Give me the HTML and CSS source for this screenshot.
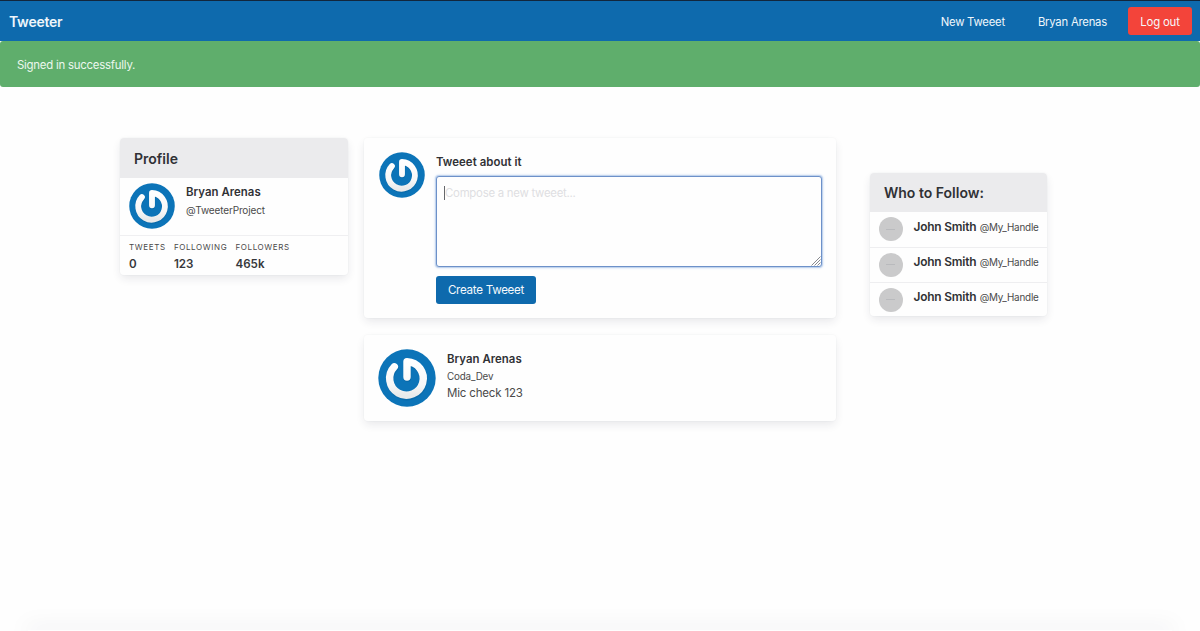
FILE: index.html
```html
<!DOCTYPE html>
<html lang="en">
<head>
<meta charset="utf-8">
<title>Tweeter</title>
<link rel="stylesheet" href="styles.css">
</head>
<body>
<svg class="defs" width="0" height="0" aria-hidden="true">
  <defs>
    <linearGradient id="ring" x1="0" y1="0" x2="0" y2="1"><stop offset="0" stop-color="#fff"/><stop offset=".7" stop-color="#f7f7f7"/><stop offset="1" stop-color="#e8eaeb"/></linearGradient>
    <symbol id="power" viewBox="0 0 58 58">
      <circle cx="29" cy="29" r="28.7" fill="#0c74b8"/>
      <g fill="none" stroke-linecap="round" stroke-linejoin="round" stroke-width="7.4">
        <path d="M16.3 18.4A16.8 16.8 0 1 0 29 13.2V28.5" stroke="#07588f" stroke-opacity=".35" transform="translate(.4 .8)"/>
        <path d="M16.3 17.8A16.8 16.8 0 1 0 29 12.6V28" stroke="url(#ring)"/>
      </g>
    </symbol>
  </defs>
</svg>
<nav class="navbar">
  <a class="brand">Tweeter</a>
  <div class="nav-end">
    <a class="nav-link">New Tweeet</a>
    <a class="nav-link">Bryan Arenas</a>
    <a class="button danger">Log out</a>
  </div>
</nav>
<div class="notification">Signed in successfully.</div>
<main class="columns">
  <section class="card profile">
    <h2 class="card-title">Profile</h2>
    <div class="profile-user">
      <svg class="avatar"><use href="#power"/></svg>
      <div>
        <p class="name">Bryan Arenas</p>
        <p class="handle">@TweeterProject</p>
      </div>
    </div>
    <div class="stats">
      <div class="stat"><p class="stat-label">Tweets</p><p class="stat-value">0</p></div>
      <div class="stat"><p class="stat-label">Following</p><p class="stat-value">123</p></div>
      <div class="stat"><p class="stat-label">Followers</p><p class="stat-value">465k</p></div>
    </div>
  </section>
  <div class="feed">
    <section class="card composer">
      <svg class="avatar"><use href="#power"/></svg>
      <form class="form">
        <label class="label" for="tweeet">Tweeet about it</label>
        <div class="field">
          <textarea class="textarea" id="tweeet" placeholder="Compose a new tweeet..."></textarea>
          <span class="caret"></span>
          <svg class="grip" viewBox="0 0 10 10"><path d="M.5 9.5L9.5.5M3.5 9.5L9.5 3.5M6.5 9.5L9.5 6.5"/></svg>
        </div>
        <button class="button primary" type="button">Create Tweeet</button>
      </form>
    </section>
    <article class="card tweet">
      <svg class="avatar large"><use href="#power"/></svg>
      <div>
        <p class="name">Bryan Arenas</p>
        <p class="handle">Coda_Dev</p>
        <p class="message">Mic check 123</p>
      </div>
    </article>
  </div>
  <section class="card follow">
    <h2 class="card-title">Who to Follow:</h2>
    <div class="person"><span class="dot"></span><p class="who"><strong>John Smith</strong> <small>@My_Handle</small></p></div>
    <div class="person"><span class="dot"></span><p class="who"><strong>John Smith</strong> <small>@My_Handle</small></p></div>
    <div class="person"><span class="dot"></span><p class="who"><strong>John Smith</strong> <small>@My_Handle</small></p></div>
  </section>
</main>
<div class="page-end"></div>
</body>
</html>
```
FILE: styles.css
```css
* { box-sizing: border-box; }
body {
  margin: 0;
  height: 631px;
  overflow: hidden;
  display: flex;
  flex-direction: column;
  background: #fefefe;
  color: #4a4a4a;
  font: 11.4px/17px Inter, "Liberation Sans", sans-serif;
}
p, h2 { margin: 0; }
.defs { position: absolute; }
.navbar {
  height: 41px;
  flex: none;
  display: flex;
  align-items: center;
  justify-content: space-between;
  padding: 0 8px 0 9px;
  border-top: 1px solid #12263c;
  background: #0e6aad;
  color: #eef6fb;
}
.brand { padding-top: 1px; font-size: 14px; font-weight: 600; letter-spacing: -.25px; }
.nav-end { display: flex; align-items: center; font-size: 11.3px; letter-spacing: -.22px; }
.nav-link { margin-right: 33px; padding-top: 2px; }
.nav-link + .nav-link { margin-right: 21px; }
.button {
  height: 28px;
  display: flex;
  align-items: center;
  justify-content: center;
  border: 0;
  border-radius: 3px;
  color: #f5f9fc;
  font: 11.4px Inter, "Liberation Sans", sans-serif;
}
.danger { width: 64px; padding-top: 1px; background: #f3443a; letter-spacing: -.2px; }
.primary { width: 100px; margin-top: 8px; background: #0e6aad; font-size: 11.6px; letter-spacing: -.28px; }
.notification {
  height: 46px;
  flex: none;
  padding: 16px 17px;
  border-radius: 3px;
  background: #5fae6c;
  color: #ecf7ee;
  letter-spacing: -.23px;
}
.columns {
  flex: 1;
  display: grid;
  grid-template-columns: 228px 472px 178px;
  column-gap: 16px;
  align-items: start;
  padding: 51px 0 0 120px;
}
.card {
  border-radius: 4px;
  background: #fefefe;
  box-shadow: 0 4px 10px -1px rgba(40, 40, 60, .11), 0 0 0 1px rgba(30, 50, 80, .014);
}
.card-title {
  height: 40px;
  padding: 0 14px;
  border-radius: 4px 4px 0 0;
  background: #ebebed;
  color: #303135;
  font-size: 14px;
  font-weight: 600;
  line-height: 41px;
}
.profile { height: 137px; }
.profile-user { height: 57px; display: flex; gap: 11px; padding: 5px 9px; }
.avatar { width: 46px; height: 46px; flex: none; }
.large { width: 58px; height: 58px; }
.name { color: #303135; font-size: 11.4px; font-weight: 600; line-height: 18px; letter-spacing: .04px; }
.profile .name { padding-top: 1px; line-height: 17px; }
.handle { font-size: 10px; line-height: 18px; letter-spacing: -.14px; }
.stats { display: flex; gap: 8.2px; padding: 3px 9px; border-top: 1px solid #efeff1; }
.stat-label { font-size: 8px; line-height: 17px; letter-spacing: .62px; text-transform: uppercase; }
.stat-value { color: #36373b; font-size: 11.6px; font-weight: 600; line-height: 16px; }
.feed { display: grid; gap: 17px; }
.composer { height: 180px; display: flex; gap: 11px; padding: 14px 14px 14px 15px; }
.composer .avatar { margin-right: .5px; margin-left: -.5px; }
.form { flex: 1; }
.label { display: block; height: 23px; padding-top: 1px; color: #303135; font-size: 11.4px; font-weight: 600; line-height: 18px; letter-spacing: .05px; }
.field { position: relative; height: 93px; padding-top: 1px; }
.textarea {
  display: block;
  width: 386px;
  height: 91px;
  resize: none;
  padding: 8px;
  border: 1px solid #6d91c9;
  border-radius: 3px;
  outline: 0;
  background: #fefefe;
  box-shadow: 0 0 1px 1px #bdd1ec, 0 0 3px 1px #dce8f8;
  font: 11.4px/17px Inter, "Liberation Sans", sans-serif;
  letter-spacing: -.26px;
}
.textarea::placeholder { color: #dedfe2; opacity: 1; }
.caret { position: absolute; left: 8px; top: 11px; width: 1px; height: 14px; background: #66686c; }
.grip { position: absolute; right: 1px; bottom: 2px; width: 10px; height: 10px; fill: none; stroke: #686b72; stroke-width: .8; }
.tweet { height: 86px; display: flex; gap: 11px; padding: 14px; }
.tweet .name { padding-top: 1px; line-height: 19px; }
.tweet .handle { line-height: 16px; font-size: 9.8px; }
.message { font-size: 11.5px; line-height: 16px; letter-spacing: -.17px; }
.follow { height: 143px; margin: 35px 0 0 18px; width: 177px; }
.follow .card-title { height: 39px; line-height: 40px; }
.person { height: 35px; display: flex; gap: 11px; padding: 5px 8.5px; }
.person + .person { border-top: 1px solid #eeeef0; padding-top: 5px; }
.person:nth-child(n+3) { margin-top: -.2px; }
.dot {
  width: 24px;
  height: 24px;
  flex: none;
  border-radius: 50%;
  background: linear-gradient(#b9babd, #b9babd) center / 9px 1px no-repeat #cacacb;
}
.who { padding-top: 1px; white-space: nowrap; line-height: 18px; }
.person + .person .who { padding-top: 0; }
.who strong { color: #303135; font-size: 11.9px; font-weight: 600; letter-spacing: -.18px; }
.who small { font-size: 9.9px; letter-spacing: -.2px; }
.page-end { height: 1px; margin: 0 28px; flex: none; box-shadow: 0 0 22px 2px rgba(30, 40, 60, .13); }
```
